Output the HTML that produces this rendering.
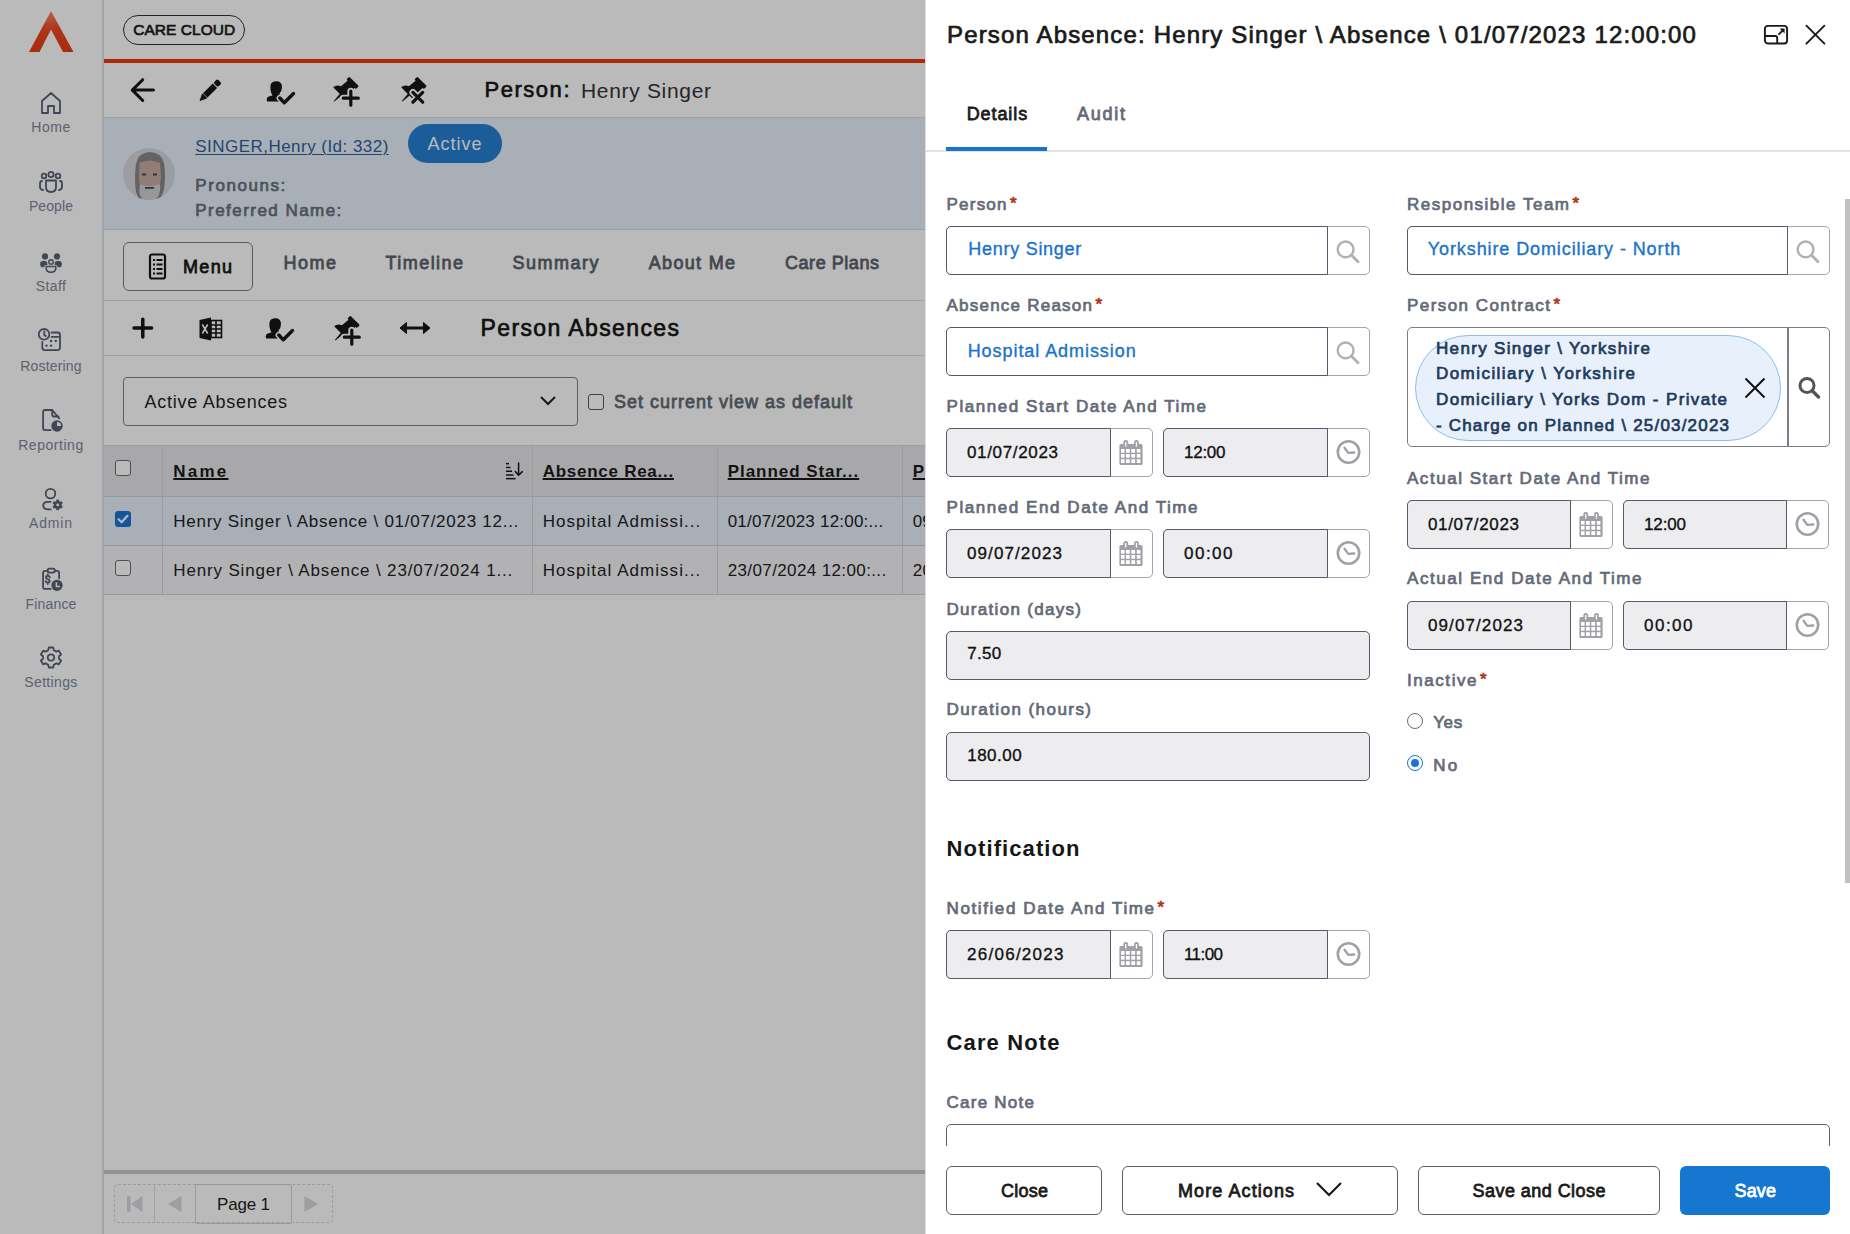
<!DOCTYPE html>
<html><head><meta charset="utf-8"><style>
*{margin:0;padding:0;box-sizing:border-box}
html,body{width:1850px;height:1234px;overflow:hidden;background:#fff;font-family:"Liberation Sans",sans-serif}
.a{position:absolute}
.t{position:absolute;white-space:nowrap;line-height:1}
</style></head><body>
<div class="a" style="left:0px;top:0px;width:925px;height:1234px;background:#fff"></div><div class="a" style="left:102px;top:0px;width:2px;height:1234px;background:#e0e3e9"></div><svg class="a" style="left:27px;top:9px;" width="48" height="46" viewBox="0 0 48 46"><defs><linearGradient id="lg" x1="0" y1="0" x2="0" y2="1"><stop offset="0" stop-color="#f58a6a"></stop><stop offset="0.45" stop-color="#ec4a22"></stop><stop offset="1" stop-color="#ea3c14"></stop></linearGradient></defs><path d="M24 2 L46.5 43 L36 43 L24 20.5 L12.5 43 L2 43 Z" fill="url(#lg)"></path></svg><div id="t1" class="t" style="left: 51px; top: 120.3px; font-size: 14px; font-weight: 400; color: rgb(125, 134, 153); transform: translateX(-50%); letter-spacing: 0.547px;">Home</div><div id="t2" class="t" style="left: 51px; top: 199.1px; font-size: 14px; font-weight: 400; color: rgb(125, 134, 153); transform: translateX(-50%); letter-spacing: 0.081px;">People</div><div id="t3" class="t" style="left: 51px; top: 279.4px; font-size: 14px; font-weight: 400; color: rgb(125, 134, 153); transform: translateX(-50%); letter-spacing: 0.363px;">Staff</div><div id="t4" class="t" style="left: 51px; top: 358.7px; font-size: 14px; font-weight: 400; color: rgb(125, 134, 153); transform: translateX(-50%); letter-spacing: 0.197px;">Rostering</div><div id="t5" class="t" style="left: 51px; top: 437.7px; font-size: 14px; font-weight: 400; color: rgb(125, 134, 153); transform: translateX(-50%); letter-spacing: 0.537px;">Reporting</div><div id="t6" class="t" style="left: 51px; top: 516.1px; font-size: 14px; font-weight: 400; color: rgb(125, 134, 153); transform: translateX(-50%); letter-spacing: 0.828px;">Admin</div><div id="t7" class="t" style="left: 51px; top: 596.5px; font-size: 14px; font-weight: 400; color: rgb(125, 134, 153); transform: translateX(-50%); letter-spacing: 0.198px;">Finance</div><div id="t8" class="t" style="left: 51px; top: 675.4px; font-size: 14px; font-weight: 400; color: rgb(125, 134, 153); transform: translateX(-50%); letter-spacing: 0.344px;">Settings</div><svg class="a" style="left:39px;top:90px;" width="24" height="26" viewBox="0 0 24 26"><path d="M3 11 L12 3 L21 11 L21 23 L15 23 L15 16 L9 16 L9 23 L3 23 Z" fill="none" stroke="#596071" stroke-width="1.8" stroke-linejoin="round" stroke-linecap="round"></path></svg><svg class="a" style="left:38px;top:170px;" width="26" height="25" viewBox="0 0 26 25"><circle cx="6" cy="6" r="2.3" fill="none" stroke="#596071" stroke-width="1.8" stroke-linejoin="round" stroke-linecap="round"></circle><circle cx="13" cy="4.5" r="2.6" fill="none" stroke="#596071" stroke-width="1.8" stroke-linejoin="round" stroke-linecap="round"></circle><circle cx="20" cy="6" r="2.3" fill="none" stroke="#596071" stroke-width="1.8" stroke-linejoin="round" stroke-linecap="round"></circle><path d="M4 11 Q2 11 2 13.5 L2 17 Q2 19.5 5 20" fill="none" stroke="#596071" stroke-width="1.8" stroke-linejoin="round" stroke-linecap="round"></path><path d="M22 11 Q24 11 24 13.5 L24 17 Q24 19.5 21 20" fill="none" stroke="#596071" stroke-width="1.8" stroke-linejoin="round" stroke-linecap="round"></path><path d="M8 10.5 L18 10.5 L18 17 Q18 22 13 22 Q8 22 8 17 Z" fill="none" stroke="#596071" stroke-width="1.8" stroke-linejoin="round" stroke-linecap="round"></path></svg><svg class="a" style="left:38px;top:251px;" width="26" height="24" viewBox="0 0 26 24"><g fill="#596071"><circle cx="7" cy="5.4" r="3.1"></circle><circle cx="19" cy="5.4" r="3.1"></circle><rect x="2.2" y="10" width="7.2" height="6.2" rx="2.8"></rect><rect x="16.6" y="10" width="7.2" height="6.2" rx="2.8"></rect></g><circle cx="13" cy="10.9" r="2.4" fill="#fff" stroke="#fff" stroke-width="2.2"></circle><circle cx="13" cy="10.9" r="2.2" fill="none" stroke="#596071" stroke-width="1.4"></circle><path d="M8.6 15.4 L17.4 15.4 Q18.2 15.4 18.2 16.3 Q18.2 21.5 13 21.5 Q7.8 21.5 7.8 16.3 Q7.8 15.4 8.6 15.4 Z" fill="#fff" stroke="#fff" stroke-width="3"></path><path d="M8.8 15.6 L17.2 15.6 Q17.9 15.6 17.9 16.4 Q17.9 21.2 13 21.2 Q8.1 21.2 8.1 16.4 Q8.1 15.6 8.8 15.6 Z" fill="none" stroke="#596071" stroke-width="1.5"></path></svg><svg class="a" style="left:37px;top:326px;" width="27" height="26" viewBox="0 0 27 26"><circle cx="7.05" cy="8.3" r="5.3" fill="none" stroke="#596071" stroke-width="1.8" stroke-linejoin="round" stroke-linecap="round"></circle><path d="M7.3 5.4 L7.3 9 L8.8 10.1" fill="none" stroke="#596071" stroke-width="1.8" stroke-linejoin="round" stroke-linecap="round"></path><path d="M5.3 15.8 L5.3 21.6 Q5.3 24.1 7.8 24.1 L20.5 24.1 Q23 24.1 23 21.6 L23 9 Q23 6.5 20.5 6.5 L14.6 6.5" fill="none" stroke="#596071" stroke-width="1.8" stroke-linejoin="round" stroke-linecap="round"></path><path d="M14.6 10.9 L23 10.9" fill="none" stroke="#596071" stroke-width="1.8" stroke-linejoin="round" stroke-linecap="round"></path><g fill="#596071"><circle cx="14.1" cy="15" r="1.2"></circle><circle cx="18.8" cy="15" r="1.2"></circle><circle cx="9.5" cy="19.6" r="1.2"></circle><circle cx="14.1" cy="19.6" r="1.2"></circle></g></svg><svg class="a" style="left:38px;top:407px;" width="26" height="27" viewBox="0 0 26 27"><path d="M12.8 23.1 L7.1 23.1 Q5.1 23.1 5.1 21.1 L5.1 5 Q5.1 3 7.1 3 L14.2 3 L21.2 11.3" fill="none" stroke="#596071" stroke-width="1.8" stroke-linejoin="round" stroke-linecap="round"></path><path d="M14.2 3 L14.2 7.5 Q14.2 9.5 16.2 9.5 L20.5 9.5" fill="none" stroke="#596071" stroke-width="1.8" stroke-linejoin="round" stroke-linecap="round"></path><circle cx="19" cy="19" r="4.9" fill="#fff" stroke="#596071" stroke-width="1.6"></circle><path d="M19 19 L19 14 A5 5 0 1 0 24 19 Z" fill="#596071"></path></svg><svg class="a" style="left:38px;top:486px;" width="26" height="26" viewBox="0 0 26 26"><circle cx="12.5" cy="7.6" r="4.8" fill="none" stroke="#596071" stroke-width="1.8" stroke-linejoin="round" stroke-linecap="round"></circle><path d="M12.6 15.8 L9.5 15.8 Q5.3 15.8 5.3 19.5 Q5.3 23.3 10 23.3 L12.8 23.3" fill="none" stroke="#596071" stroke-width="1.8" stroke-linejoin="round" stroke-linecap="round"></path><g transform="translate(19.7,18.9)"><circle r="3.9" fill="#596071"></circle><g fill="#596071"><rect x="-1.4" y="-5.3" width="2.8" height="10.6" rx="0.8"></rect><rect x="-1.4" y="-5.3" width="2.8" height="10.6" rx="0.8" transform="rotate(60)"></rect><rect x="-1.4" y="-5.3" width="2.8" height="10.6" rx="0.8" transform="rotate(120)"></rect></g><circle r="1.4" fill="#fff"></circle></g></svg><svg class="a" style="left:38px;top:566px;" width="26" height="26" viewBox="0 0 26 26"><path d="M12.8 22.9 L7.1 22.9 Q5.1 22.9 5.1 20.9 L5.1 6.8 Q5.1 4.8 7.1 4.8 L9.5 4.8 M16.9 4.8 L19.1 4.8 Q21.1 4.8 21.1 6.8 L21.1 12.3" fill="none" stroke="#596071" stroke-width="1.8" stroke-linejoin="round" stroke-linecap="round"></path><rect x="9.5" y="2.6" width="7.4" height="4" rx="2" fill="none" stroke="#596071" stroke-width="1.8" stroke-linejoin="round" stroke-linecap="round"></rect><path d="M11.9 11.2 Q11.4 9.9 9.8 9.9 Q8 9.9 8 11.4 Q8 12.7 9.8 13.1 Q11.7 13.5 11.7 15 Q11.7 16.5 9.8 16.5 Q8.1 16.5 7.6 15.3 M9.8 8.3 L9.8 9.9 M9.8 16.5 L9.8 18" fill="none" stroke="#596071" stroke-width="1.8" stroke-linejoin="round" stroke-linecap="round"></path><circle cx="19" cy="19.3" r="5.6" fill="#596071"></circle><path d="M18.4 16.2 L18.4 20.4 L22 20.4" fill="none" stroke="#fff" stroke-width="1.5"></path></svg><svg class="a" style="left:39px;top:645px;" width="24" height="25" viewBox="0 0 24 25"><g transform="translate(12,12.5)"><path d="M-2.2 -10 L2.2 -10 L2.8 -7.3 L5.3 -5.9 L7.9 -6.8 L10.1 -3 L8 -1.2 L8 1.2 L10.1 3 L7.9 6.8 L5.3 5.9 L2.8 7.3 L2.2 10 L-2.2 10 L-2.8 7.3 L-5.3 5.9 L-7.9 6.8 L-10.1 3 L-8 1.2 L-8 -1.2 L-10.1 -3 L-7.9 -6.8 L-5.3 -5.9 L-2.8 -7.3 Z" fill="none" stroke="#596071" stroke-width="1.8" stroke-linejoin="round" stroke-linecap="round"></path><circle r="3.2" fill="none" stroke="#596071" stroke-width="1.8" stroke-linejoin="round" stroke-linecap="round"></circle></g></svg><div class="a" style="left:123px;top:15px;width:122px;height:30px;border:1.6px solid #2f323b;border-radius:15px"></div><div id="t9" class="t" style="left: 184.2px; top: 21.7px; font-size: 15.5px; font-weight: 400; color: rgb(26, 26, 26); transform: translateX(-50%); -webkit-text-stroke: 0.65px rgb(26, 26, 26); letter-spacing: 0.04px;">CARE CLOUD</div><div class="a" style="left:104px;top:59px;width:821px;height:4px;background:#f0380f"></div><div class="a" style="left:104px;top:117px;width:821px;height:1px;background:#d9dce3"></div><svg class="a" style="left:128px;top:76px;" width="30" height="28" viewBox="0 0 30 28"><path d="M4.8 14.1 L25.5 14.1 M14.7 3.7 L4.3 14.1 L14.7 24.5" fill="none" stroke="#161616" stroke-width="3" stroke-linecap="round" stroke-linejoin="round"></path></svg><svg class="a" style="left:196px;top:76px;" width="28" height="28" viewBox="0 0 28 28"><g transform="translate(4.4,24.2) rotate(45)"><path d="M0 0.5 L-3 -6 L3 -6 Z" fill="#161616" stroke="#161616" stroke-width="0.8" stroke-linejoin="round"></path><rect x="-3.1" y="-20.5" width="6.2" height="13.6" fill="#161616"></rect><rect x="-3.1" y="-27" width="6.2" height="5.5" rx="1.6" fill="#161616"></rect></g></svg><svg class="a" style="left:265.5px;top:79.5px;" width="30" height="26" viewBox="0 0 30 26"><path d="M9.5 1.2 Q16 0.8 16 7 Q16 11 13.5 13.2 L14.5 16 L13.5 21.6 L1.5 21.6 Q0.8 21.6 0.8 20 L0.8 19 Q0.8 16.8 3.5 16.2 L6.5 15.5 Q5 13 4.5 10 Q3.2 1.5 9.5 1.2 Z" fill="#161616"></path><path d="M13.8 18 L18.3 22.8 L27.5 13.5" fill="none" stroke="#fff" stroke-width="6.5" stroke-linecap="round" stroke-linejoin="round"></path><path d="M13.8 18 L18.3 22.8 L27.5 13.5" fill="none" stroke="#161616" stroke-width="3.4" stroke-linecap="round" stroke-linejoin="round"></path></svg><svg class="a" style="left:332px;top:76px;" width="30" height="32" viewBox="0 0 30 32"><g transform="translate(21.2,6.2) rotate(45)"><path d="M-6.8 0 Q-6.8 -1.2 -5.6 -1.2 L5.6 -1.2 Q6.8 -1.2 6.8 0 L6.8 1.8 Q6.8 3 5.4 3 L4.9 3 L5.9 11.5 Q10.5 13.6 10.5 17.8 L-10.5 17.8 Q-10.5 13.6 -5.9 11.5 L-4.9 3 L-5.4 3 Q-6.8 3 -6.8 1.8 Z" fill="#161616"></path><path d="M-1.3 17.5 L1.3 17.5 L0.4 27 L-0.4 27 Z" fill="#161616"></path></g><path d="M18.8 15.2 L18.8 29.2 M11.3 22.2 L26.3 22.2" stroke="#fff" stroke-width="7" stroke-linecap="round"></path><path d="M18.8 15.2 L18.8 29.2 M11.3 22.2 L26.3 22.2" stroke="#161616" stroke-width="3.2" stroke-linecap="round"></path></svg><svg class="a" style="left:400.2px;top:76px;" width="30" height="32" viewBox="0 0 30 32"><g transform="translate(21.2,6.2) rotate(45)"><path d="M-6.8 0 Q-6.8 -1.2 -5.6 -1.2 L5.6 -1.2 Q6.8 -1.2 6.8 0 L6.8 1.8 Q6.8 3 5.4 3 L4.9 3 L5.9 11.5 Q10.5 13.6 10.5 17.8 L-10.5 17.8 Q-10.5 13.6 -5.9 11.5 L-4.9 3 L-5.4 3 Q-6.8 3 -6.8 1.8 Z" fill="#161616"></path><path d="M-1.3 17.5 L1.3 17.5 L0.4 27 L-0.4 27 Z" fill="#161616"></path></g><path d="M12.9 16.4 L22.7 26.2 M22.7 16.4 L12.9 26.2" stroke="#fff" stroke-width="7" stroke-linecap="round"></path><path d="M12.9 16.4 L22.7 26.2 M22.7 16.4 L12.9 26.2" stroke="#161616" stroke-width="3.2" stroke-linecap="round"></path></svg><div id="t10" class="t" style="left: 484.5px; top: 79px; font-size: 22px; font-weight: 400; color: rgb(22, 22, 22); -webkit-text-stroke: 0.66px rgb(22, 22, 22); letter-spacing: 1.529px;">Person:</div><div id="t11" class="t" style="left: 581px; top: 79.8px; font-size: 21px; font-weight: 400; color: rgb(51, 51, 51); letter-spacing: 0.676px;">Henry Singer</div><div class="a" style="left:104px;top:118px;width:821px;height:112px;background:#e8f0fb"></div><div class="a" style="left:104px;top:229px;width:821px;height:1px;background:#d5dae2"></div><svg class="a" style="left:123px;top:148px;" width="52" height="52" viewBox="0 0 52 52"><defs><clipPath id="avc"><circle cx="26" cy="26" r="26"></circle></clipPath></defs><g clip-path="url(#avc)"><circle cx="26" cy="26" r="26" fill="#d6d7dc"></circle><path d="M13 44 Q11 30 13 16 Q15 5 26 4 Q38 4 41 15 Q43 27 41 41 Q39 49 36 51 L16 51 Z" fill="#88878e"></path><path d="M16.5 15 Q26 10 37 15 L38 30 Q37 38 34 40 L19 40 Q16 37 16 30 Z" fill="#c9aca2"></path><path d="M17 36 Q26 40 37 36 Q38 47 33 51 Q26 54 19 51 Q15 46 17 36 Z" fill="#cfcfd3"></path><rect x="19" y="25.5" width="4" height="2" fill="#4a4a4e"></rect><rect x="30" y="25.5" width="4" height="2" fill="#4a4a4e"></rect><rect x="22" y="39" width="9" height="1.8" fill="#4a4a4e"></rect></g></svg><div id="t12" class="t" style="left: 195.3px; top: 138.1px; font-size: 17px; font-weight: 400; color: rgb(48, 95, 150); text-decoration: underline 1px; text-underline-offset: 2px; letter-spacing: 0.463px;">SINGER,Henry (Id: 332)</div><div class="a" style="left:408px;top:124px;width:94px;height:39px;background:#2580d2;border-radius:20px"></div><div id="t13" class="t" style="left: 455px; top: 135px; font-size: 18px; font-weight: 400; color: rgb(255, 255, 255); transform: translateX(-50%); letter-spacing: 0.994px;">Active</div><div id="t14" class="t" style="left: 195.3px; top: 176.9px; font-size: 17px; font-weight: 400; color: rgb(106, 113, 125); -webkit-text-stroke: 0.71px rgb(106, 113, 125); letter-spacing: 1.563px;">Pronouns:</div><div id="t15" class="t" style="left: 195.3px; top: 202.3px; font-size: 17px; font-weight: 400; color: rgb(106, 113, 125); -webkit-text-stroke: 0.71px rgb(106, 113, 125); letter-spacing: 1.452px;">Preferred Name:</div><div class="a" style="left:123px;top:242px;width:130px;height:49px;border:1.8px solid #777c8a;border-radius:6px"></div><svg class="a" style="left:147px;top:252px;" width="22" height="29" viewBox="0 0 22 29"><rect x="3" y="2.5" width="15" height="24" rx="2" fill="none" stroke="#161616" stroke-width="2.2"></rect><g fill="#161616"><rect x="6" y="7" width="2" height="2"></rect><rect x="9.5" y="7" width="6" height="2"></rect><rect x="6" y="11.5" width="2" height="2"></rect><rect x="9.5" y="11.5" width="6" height="2"></rect><rect x="6" y="16" width="2" height="2"></rect><rect x="9.5" y="16" width="6" height="2"></rect><rect x="6" y="20.5" width="2" height="2"></rect><rect x="9.5" y="20.5" width="6" height="2"></rect></g></svg><div id="t16" class="t" style="left: 183px; top: 257.6px; font-size: 18px; font-weight: 400; color: rgb(22, 22, 22); -webkit-text-stroke: 0.76px rgb(22, 22, 22); letter-spacing: 1.323px;">Menu</div><div id="t17" class="t" style="left: 283.4px; top: 254.3px; font-size: 18px; font-weight: 400; color: rgb(92, 98, 108); -webkit-text-stroke: 0.76px rgb(92, 98, 108); letter-spacing: 1.528px;">Home</div><div id="t18" class="t" style="left: 385.6px; top: 254.3px; font-size: 18px; font-weight: 400; color: rgb(92, 98, 108); -webkit-text-stroke: 0.76px rgb(92, 98, 108); letter-spacing: 1.434px;">Timeline</div><div id="t19" class="t" style="left: 512.4px; top: 254.3px; font-size: 18px; font-weight: 400; color: rgb(92, 98, 108); -webkit-text-stroke: 0.76px rgb(92, 98, 108); letter-spacing: 1.531px;">Summary</div><div id="t20" class="t" style="left: 648.8px; top: 254.3px; font-size: 18px; font-weight: 400; color: rgb(92, 98, 108); -webkit-text-stroke: 0.76px rgb(92, 98, 108); letter-spacing: 1.308px;">About Me</div><div id="t21" class="t" style="left: 785px; top: 254.3px; font-size: 18px; font-weight: 400; color: rgb(92, 98, 108); -webkit-text-stroke: 0.76px rgb(92, 98, 108); letter-spacing: 0.55px;">Care Plans</div><div class="a" style="left:104px;top:300px;width:821px;height:1px;background:#d9dce3"></div><svg class="a" style="left:130px;top:316px;" width="26" height="26" viewBox="0 0 26 26"><path d="M12.8 3.3 L12.8 20.9 M4 12.1 L21.6 12.1" stroke="#161616" stroke-width="3.5" stroke-linecap="round"></path></svg><svg class="a" style="left:198px;top:316px;" width="26" height="26" viewBox="0 0 26 26"><path d="M1.5 4 L13 1.5 L13 24.5 L1.5 22 Z" fill="#161616"></path><rect x="13" y="4.5" width="10.5" height="17" fill="none" stroke="#161616" stroke-width="1.6"></rect><path d="M13 9 H23.5 M13 13 H23.5 M13 17 H23.5 M18 4.5 V21.5" stroke="#161616" stroke-width="1.6"></path><path d="M4.3 8.5 L9.7 17.5 M9.7 8.5 L4.3 17.5" stroke="#fff" stroke-width="1.6"></path></svg><svg class="a" style="left:264.5px;top:316.5px;" width="30" height="26" viewBox="0 0 30 26"><path d="M9.5 1.2 Q16 0.8 16 7 Q16 11 13.5 13.2 L14.5 16 L13.5 21.6 L1.5 21.6 Q0.8 21.6 0.8 20 L0.8 19 Q0.8 16.8 3.5 16.2 L6.5 15.5 Q5 13 4.5 10 Q3.2 1.5 9.5 1.2 Z" fill="#161616"></path><path d="M13.8 18 L18.3 22.8 L27.5 13.5" fill="none" stroke="#fff" stroke-width="6.5" stroke-linecap="round" stroke-linejoin="round"></path><path d="M13.8 18 L18.3 22.8 L27.5 13.5" fill="none" stroke="#161616" stroke-width="3.4" stroke-linecap="round" stroke-linejoin="round"></path></svg><svg class="a" style="left:332.5px;top:315px;" width="30" height="32" viewBox="0 0 30 32"><g transform="translate(21.2,6.2) rotate(45)"><path d="M-6.8 0 Q-6.8 -1.2 -5.6 -1.2 L5.6 -1.2 Q6.8 -1.2 6.8 0 L6.8 1.8 Q6.8 3 5.4 3 L4.9 3 L5.9 11.5 Q10.5 13.6 10.5 17.8 L-10.5 17.8 Q-10.5 13.6 -5.9 11.5 L-4.9 3 L-5.4 3 Q-6.8 3 -6.8 1.8 Z" fill="#161616"></path><path d="M-1.3 17.5 L1.3 17.5 L0.4 27 L-0.4 27 Z" fill="#161616"></path></g><path d="M18.8 15.2 L18.8 29.2 M11.3 22.2 L26.3 22.2" stroke="#fff" stroke-width="7" stroke-linecap="round"></path><path d="M18.8 15.2 L18.8 29.2 M11.3 22.2 L26.3 22.2" stroke="#161616" stroke-width="3.2" stroke-linecap="round"></path></svg><svg class="a" style="left:398px;top:318px;" width="34" height="20" viewBox="0 0 34 20"><path d="M5 10 L29 10" stroke="#161616" stroke-width="3"></path><path d="M2 10 L8.5 4.5 L8.5 15.5 Z M32 10 L25.5 4.5 L25.5 15.5 Z" fill="#161616" stroke="#161616" stroke-width="1" stroke-linejoin="round"></path></svg><div id="t22" class="t" style="left: 480.5px; top: 317px; font-size: 23px; font-weight: 400; color: rgb(22, 22, 22); -webkit-text-stroke: 0.69px rgb(22, 22, 22); letter-spacing: 1.392px;">Person Absences</div><div class="a" style="left:104px;top:355px;width:821px;height:1px;background:#d9dce3"></div><div class="a" style="left:123px;top:377px;width:455px;height:49px;border:1.8px solid #7d8292;border-radius:4px"></div><div id="t23" class="t" style="left: 144.4px; top: 393.3px; font-size: 18px; font-weight: 400; color: rgb(31, 31, 31); letter-spacing: 0.752px;">Active Absences</div><svg class="a" style="left:538px;top:394px;" width="20" height="14" viewBox="0 0 20 14"><path d="M3.5 3.5 L10 10 L16.5 3.5" fill="none" stroke="#222" stroke-width="2" stroke-linecap="round"></path></svg><div class="a" style="left:588px;top:394px;width:16px;height:16px;border:1.5px solid #555a63;border-radius:3px;background:#fff"></div><div id="t24" class="t" style="left: 614px; top: 393.1px; font-size: 18px; font-weight: 400; color: rgb(100, 106, 116); -webkit-text-stroke: 0.76px rgb(100, 106, 116); letter-spacing: 0.996px;">Set current view as default</div><div class="a" style="left:104px;top:446px;width:821px;height:50px;background:#e6e5ea"></div><div class="a" style="left:104px;top:496px;width:821px;height:49px;background:#e8f0fb"></div><div class="a" style="left:104px;top:545px;width:821px;height:50px;background:#f5f5f8"></div><div class="a" style="left:104px;top:496px;width:821px;height:1px;background:#cfcfd6"></div><div class="a" style="left:104px;top:545px;width:821px;height:1px;background:#cfcfd6"></div><div class="a" style="left:104px;top:594px;width:821px;height:1px;background:#cfcfd6"></div><div class="a" style="left:104px;top:445px;width:821px;height:1px;background:#d9d9de"></div><div class="a" style="left:162px;top:446px;width:1px;height:149px;background:#d6d6dc"></div><div class="a" style="left:532px;top:446px;width:1px;height:149px;background:#d6d6dc"></div><div class="a" style="left:717px;top:446px;width:1px;height:149px;background:#d6d6dc"></div><div class="a" style="left:902px;top:446px;width:1px;height:149px;background:#d6d6dc"></div><div class="a" style="left:115px;top:460px;width:16px;height:16px;border:1.5px solid #6a6e77;border-radius:3px;background:#fff"></div><div class="a" style="left:115px;top:511px;width:16px;height:16px;border:none;border-radius:3px;background:#1a73d9"></div><svg class="a" style="left:115px;top:511px;" width="16" height="16" viewBox="0 0 16 16"><path d="M3.5 8.2 L6.6 11.3 L12.5 4.8" fill="none" stroke="#fff" stroke-width="2.2" stroke-linecap="round" stroke-linejoin="round"></path></svg><div class="a" style="left:115px;top:560px;width:16px;height:16px;border:1.5px solid #6a6e77;border-radius:3px;background:#fff"></div><div id="t25" class="t" style="left: 173.3px; top: 462.9px; font-size: 17px; font-weight: 700; color: rgb(26, 26, 26); text-decoration: underline 1.5px; text-underline-offset: 1px; letter-spacing: 2.229px;">Name</div><div id="t26" class="t" style="left: 542.7px; top: 462.9px; font-size: 17px; font-weight: 700; color: rgb(26, 26, 26); text-decoration: underline 1.5px; text-underline-offset: 1px; letter-spacing: 0.734px;">Absence Rea...</div><div id="t27" class="t" style="left: 727.7px; top: 462.9px; font-size: 17px; font-weight: 700; color: rgb(26, 26, 26); text-decoration: underline 1.5px; text-underline-offset: 1px; letter-spacing: 0.953px;">Planned Star...</div><div id="t28" class="t" style="left: 912.7px; top: 462.9px; font-size: 17px; font-weight: 700; color: rgb(26, 26, 26); text-decoration: underline 1.5px; text-underline-offset: 1px; letter-spacing: 1.029px;">Planned End...</div><svg class="a" style="left:503px;top:460px;" width="22" height="21" viewBox="0 0 22 21"><g fill="#161616"><rect x="3" y="2.9" width="3" height="1.5"></rect><rect x="3" y="6.7" width="4.5" height="1.5"></rect><rect x="3" y="10.5" width="6" height="1.5"></rect><rect x="3" y="14.3" width="7.5" height="1.5"></rect><rect x="3" y="17.9" width="9.5" height="1.5"></rect></g><path d="M15.6 3 L15.6 15.2 M12.3 11.6 L15.6 15.2 L19.3 11.6" fill="none" stroke="#161616" stroke-width="1.5" stroke-linecap="round"></path></svg><div id="t29" class="t" style="left: 173.3px; top: 512.6px; font-size: 17px; font-weight: 400; color: rgb(34, 34, 34); letter-spacing: 0.734px;">Henry Singer \ Absence \ 01/07/2023 12...</div><div id="t30" class="t" style="left: 542.7px; top: 512.6px; font-size: 17px; font-weight: 400; color: rgb(34, 34, 34); letter-spacing: 1.034px;">Hospital Admissi...</div><div id="t31" class="t" style="left: 727.7px; top: 512.6px; font-size: 17px; font-weight: 400; color: rgb(34, 34, 34); letter-spacing: 0.224px;">01/07/2023 12:00:...</div><div id="t32" class="t" style="left: 912.7px; top: 512.6px; font-size: 17px; font-weight: 400; color: rgb(34, 34, 34); letter-spacing: 0.224px;">09/07/2023 00:00:...</div><div id="t33" class="t" style="left: 173.3px; top: 561.9px; font-size: 17px; font-weight: 400; color: rgb(34, 34, 34); letter-spacing: 0.841px;">Henry Singer \ Absence \ 23/07/2024 1...</div><div id="t34" class="t" style="left: 542.7px; top: 561.9px; font-size: 17px; font-weight: 400; color: rgb(34, 34, 34); letter-spacing: 1.034px;">Hospital Admissi...</div><div id="t35" class="t" style="left: 727.7px; top: 561.9px; font-size: 17px; font-weight: 400; color: rgb(34, 34, 34); letter-spacing: 0.382px;">23/07/2024 12:00:...</div><div id="t36" class="t" style="left: 912.7px; top: 561.9px; font-size: 17px; font-weight: 400; color: rgb(34, 34, 34); letter-spacing: 0.382px;">20/08/2024 00:00:...</div><div class="a" style="left:104px;top:1170px;width:821px;height:4px;background:#c9c7cc"></div><div class="a" style="left:114px;top:1184px;width:219px;height:39px;border:1px dashed #d8d8dc;border-radius:4px"></div><div class="a" style="left:195px;top:1184px;width:97px;height:40px;border:1px solid #d2d2d6;border-radius:2px"></div><div class="a" style="left:154px;top:1184px;width:1px;height:39px;background:#dedee2"></div><svg class="a" style="left:125px;top:1194px;" width="20" height="20" viewBox="0 0 20 20"><rect x="2" y="2" width="3.5" height="16" fill="#d9d9df"></rect><path d="M17.5 2 L17.5 18 L6 10 Z" fill="#d9d9df"></path></svg><svg class="a" style="left:166px;top:1194px;" width="18" height="20" viewBox="0 0 18 20"><path d="M15.5 2 L15.5 18 L2 10 Z" fill="#d9d9df"></path></svg><svg class="a" style="left:302px;top:1194px;" width="18" height="20" viewBox="0 0 18 20"><path d="M2.5 2 L2.5 18 L16 10 Z" fill="#d9d9df"></path></svg><div id="t37" class="t" style="left: 217px; top: 1195.9px; font-size: 17px; font-weight: 400; color: rgb(34, 34, 34); letter-spacing: -0.178px;">Page 1</div><div class="a" style="left:0px;top:0px;width:925px;height:1234px;background:rgba(0,0,0,0.27)"></div><div class="a" style="left:925px;top:0px;width:925px;height:1234px;background:#fff"></div><div class="a" style="left:925px;top:0px;width:1px;height:1234px;background:#dddde3"></div><div id="t38" class="t" style="left: 947px; top: 23.2px; font-size: 24px; font-weight: 400; color: rgb(26, 26, 26); -webkit-text-stroke: 0.72px rgb(26, 26, 26); letter-spacing: 1.161px;">Person Absence: Henry Singer \ Absence \ 01/07/2023 12:00:00</div><svg class="a" style="left:1762px;top:23px;" width="28" height="24" viewBox="0 0 28 24"><rect x="2.9" y="2.9" width="22.2" height="17.6" rx="3" fill="none" stroke="#1a1a1a" stroke-width="1.9"></rect><path d="M2.9 13 L13.2 13 Q15.2 13 15.2 15 L15.2 20.5" fill="none" stroke="#1a1a1a" stroke-width="1.9"></path><path d="M17 11.2 L21.2 7" stroke="#1a1a1a" stroke-width="1.8" stroke-linecap="round"></path><path d="M17.6 5.6 L22.6 5.6 L22.6 10.6 Z" fill="#1a1a1a"></path></svg><svg class="a" style="left:1803px;top:23px;" width="25" height="25" viewBox="0 0 25 25"><path d="M3.4 2.7 L21.4 20.7 M21.4 2.7 L3.4 20.7" stroke="#1a1a1a" stroke-width="1.9" stroke-linecap="round"></path></svg><div id="t39" class="t" style="left: 966.7px; top: 104.8px; font-size: 18px; font-weight: 400; color: rgb(26, 26, 26); -webkit-text-stroke: 0.76px rgb(26, 26, 26); letter-spacing: 0.911px;">Details</div><div id="t40" class="t" style="left: 1077px; top: 104.8px; font-size: 18px; font-weight: 400; color: rgb(99, 105, 119); -webkit-text-stroke: 0.76px rgb(99, 105, 119); letter-spacing: 1.742px;">Audit</div><div class="a" style="left:925px;top:150px;width:925px;height:1.5px;background:#e2e2e6"></div><div class="a" style="left:946px;top:147px;width:101px;height:4px;background:#1a73cf"></div><div class="a" style="left:1845px;top:199px;width:5px;height:684px;background:#c1c1c1"></div><div id="t41" class="t" style="left: 946.5px; top: 195.6px; font-size: 17px; font-weight: 400; color: rgb(99, 106, 120); -webkit-text-stroke: 0.71px rgb(99, 106, 120); letter-spacing: 1.225px;">Person</div><div id="t42" class="t" style="left:1010.0px;top:194.6px;font-size:17px;font-weight:400;color:#b2341c;-webkit-text-stroke:0.71px #b2341c;">*</div><div class="a" style="left:946px;top:226px;width:424px;height:49px;border:1.5px solid #a4a4ab;border-radius:5px;background:#fff"></div><div class="a" style="left:946px;top:226px;width:382px;height:49px;border:1.6px solid #555969;border-right:1.8px solid #555969;border-radius:5px 0 0 5px;background:#fff"></div><svg class="a" style="left:1335px;top:238.5px;" width="26" height="26" viewBox="0 0 26 26"><circle cx="10.6" cy="10.4" r="7.9" fill="none" stroke="#b0b0b5" stroke-width="2.4"></circle><path d="M16.3 16.1 L23 22.8" stroke="#b0b0b5" stroke-width="2.8" stroke-linecap="round"></path></svg><div id="t43" class="t" style="left: 968.3px; top: 240.4px; font-size: 18px; font-weight: 400; color: rgb(26, 115, 201); -webkit-text-stroke: 0.36px rgb(26, 115, 201); letter-spacing: 0.723px;">Henry Singer</div><div id="t44" class="t" style="left: 946.5px; top: 297px; font-size: 17px; font-weight: 400; color: rgb(99, 106, 120); -webkit-text-stroke: 0.71px rgb(99, 106, 120); letter-spacing: 1.232px;">Absence Reason</div><div id="t45" class="t" style="left:1095.5px;top:296.0px;font-size:17px;font-weight:400;color:#b2341c;-webkit-text-stroke:0.71px #b2341c;">*</div><div class="a" style="left:946px;top:327px;width:424px;height:49px;border:1.5px solid #a4a4ab;border-radius:5px;background:#fff"></div><div class="a" style="left:946px;top:327px;width:382px;height:49px;border:1.6px solid #555969;border-right:1.8px solid #555969;border-radius:5px 0 0 5px;background:#fff"></div><svg class="a" style="left:1335px;top:339.5px;" width="26" height="26" viewBox="0 0 26 26"><circle cx="10.6" cy="10.4" r="7.9" fill="none" stroke="#b0b0b5" stroke-width="2.4"></circle><path d="M16.3 16.1 L23 22.8" stroke="#b0b0b5" stroke-width="2.8" stroke-linecap="round"></path></svg><div id="t46" class="t" style="left: 967.7px; top: 342.1px; font-size: 18px; font-weight: 400; color: rgb(26, 115, 201); -webkit-text-stroke: 0.36px rgb(26, 115, 201); letter-spacing: 0.937px;">Hospital Admission</div><div id="t47" class="t" style="left: 946.5px; top: 398px; font-size: 17px; font-weight: 400; color: rgb(99, 106, 120); -webkit-text-stroke: 0.71px rgb(99, 106, 120); letter-spacing: 1.548px;">Planned Start Date And Time</div><div class="a" style="left:946px;top:428px;width:207px;height:49px;border:1.5px solid #a4a4ab;border-radius:5px;background:#fff"></div><div class="a" style="left:946px;top:428px;width:165px;height:49px;border:1.6px solid #555969;border-right:1.8px solid #555969;border-radius:5px 0 0 5px;background:#ededf0"></div><div id="t48" class="t" style="left: 967px; top: 443.6px; font-size: 17px; font-weight: 400; color: rgb(17, 17, 17); -webkit-text-stroke: 0.34px rgb(17, 17, 17); letter-spacing: 0.656px;">01/07/2023</div><svg class="a" style="left:1119.0px;top:439.0px;" width="24" height="27" viewBox="0 0 24 27"><rect x="0.4" y="5" width="23.2" height="21" rx="1.6" fill="#a0a0a7"></rect><rect x="4.3" y="1" width="4.9" height="8" rx="2.4" fill="#a0a0a7"></rect><rect x="15" y="1" width="4.9" height="8" rx="2.4" fill="#a0a0a7"></rect><rect x="6.1" y="3" width="1.3" height="4.5" fill="#fff"></rect><rect x="16.8" y="3" width="1.3" height="4.5" fill="#fff"></rect><g fill="#fff"><rect x="2" y="10" width="3.6" height="3.7"></rect><rect x="7" y="10" width="3.8" height="3.7"></rect><rect x="12.3" y="10" width="3.8" height="3.7"></rect><rect x="17.8" y="10" width="3.6" height="3.7"></rect><rect x="2" y="15" width="3.6" height="3.7"></rect><rect x="7" y="15" width="3.8" height="3.7"></rect><rect x="12.3" y="15" width="3.8" height="3.7"></rect><rect x="17.8" y="15" width="3.6" height="3.7"></rect><rect x="2" y="20.2" width="3.6" height="3.8"></rect><rect x="7" y="20.2" width="3.8" height="3.8"></rect><rect x="12.3" y="20.2" width="3.8" height="3.8"></rect><rect x="17.8" y="20.2" width="3.6" height="3.8"></rect></g></svg><div class="a" style="left:1163px;top:428px;width:207px;height:49px;border:1.5px solid #a4a4ab;border-radius:5px;background:#fff"></div><div class="a" style="left:1163px;top:428px;width:165px;height:49px;border:1.6px solid #555969;border-right:1.8px solid #555969;border-radius:5px 0 0 5px;background:#ededf0"></div><div id="t49" class="t" style="left: 1184px; top: 443.6px; font-size: 17px; font-weight: 400; color: rgb(17, 17, 17); -webkit-text-stroke: 0.34px rgb(17, 17, 17); letter-spacing: -0.262px;">12:00</div><svg class="a" style="left:1334.8px;top:439.4px;" width="28" height="28" viewBox="0 0 28 28"><circle cx="13.5" cy="13" r="10.7" fill="none" stroke="#a0a0a7" stroke-width="2.6"></circle><path d="M9.5 8.7 L13.3 13.9 L19.2 13.5" fill="none" stroke="#a0a0a7" stroke-width="2.3" stroke-linecap="round" stroke-linejoin="round"></path></svg><div id="t50" class="t" style="left: 946.5px; top: 499.2px; font-size: 17px; font-weight: 400; color: rgb(99, 106, 120); -webkit-text-stroke: 0.71px rgb(99, 106, 120); letter-spacing: 1.559px;">Planned End Date And Time</div><div class="a" style="left:946px;top:529px;width:207px;height:49px;border:1.5px solid #a4a4ab;border-radius:5px;background:#fff"></div><div class="a" style="left:946px;top:529px;width:165px;height:49px;border:1.6px solid #555969;border-right:1.8px solid #555969;border-radius:5px 0 0 5px;background:#ededf0"></div><div id="t51" class="t" style="left: 967px; top: 544.6px; font-size: 17px; font-weight: 400; color: rgb(17, 17, 17); -webkit-text-stroke: 0.34px rgb(17, 17, 17); letter-spacing: 1.101px;">09/07/2023</div><svg class="a" style="left:1119.0px;top:540.0px;" width="24" height="27" viewBox="0 0 24 27"><rect x="0.4" y="5" width="23.2" height="21" rx="1.6" fill="#a0a0a7"></rect><rect x="4.3" y="1" width="4.9" height="8" rx="2.4" fill="#a0a0a7"></rect><rect x="15" y="1" width="4.9" height="8" rx="2.4" fill="#a0a0a7"></rect><rect x="6.1" y="3" width="1.3" height="4.5" fill="#fff"></rect><rect x="16.8" y="3" width="1.3" height="4.5" fill="#fff"></rect><g fill="#fff"><rect x="2" y="10" width="3.6" height="3.7"></rect><rect x="7" y="10" width="3.8" height="3.7"></rect><rect x="12.3" y="10" width="3.8" height="3.7"></rect><rect x="17.8" y="10" width="3.6" height="3.7"></rect><rect x="2" y="15" width="3.6" height="3.7"></rect><rect x="7" y="15" width="3.8" height="3.7"></rect><rect x="12.3" y="15" width="3.8" height="3.7"></rect><rect x="17.8" y="15" width="3.6" height="3.7"></rect><rect x="2" y="20.2" width="3.6" height="3.8"></rect><rect x="7" y="20.2" width="3.8" height="3.8"></rect><rect x="12.3" y="20.2" width="3.8" height="3.8"></rect><rect x="17.8" y="20.2" width="3.6" height="3.8"></rect></g></svg><div class="a" style="left:1163px;top:529px;width:207px;height:49px;border:1.5px solid #a4a4ab;border-radius:5px;background:#fff"></div><div class="a" style="left:1163px;top:529px;width:165px;height:49px;border:1.6px solid #555969;border-right:1.8px solid #555969;border-radius:5px 0 0 5px;background:#ededf0"></div><div id="t52" class="t" style="left: 1184px; top: 544.6px; font-size: 17px; font-weight: 400; color: rgb(17, 17, 17); -webkit-text-stroke: 0.34px rgb(17, 17, 17); letter-spacing: 1.488px;">00:00</div><svg class="a" style="left:1334.8px;top:540.4px;" width="28" height="28" viewBox="0 0 28 28"><circle cx="13.5" cy="13" r="10.7" fill="none" stroke="#a0a0a7" stroke-width="2.6"></circle><path d="M9.5 8.7 L13.3 13.9 L19.2 13.5" fill="none" stroke="#a0a0a7" stroke-width="2.3" stroke-linecap="round" stroke-linejoin="round"></path></svg><div id="t53" class="t" style="left: 946.5px; top: 600.6px; font-size: 17px; font-weight: 400; color: rgb(99, 106, 120); -webkit-text-stroke: 0.71px rgb(99, 106, 120); letter-spacing: 1.306px;">Duration (days)</div><div class="a" style="left:946px;top:631px;width:424px;height:49px;border:1.6px solid #555969;border-radius:5px;background:#ededf0"></div><div id="t54" class="t" style="left: 967.2px; top: 645.4px; font-size: 17px; font-weight: 400; color: rgb(17, 17, 17); -webkit-text-stroke: 0.34px rgb(17, 17, 17); letter-spacing: 0.302px;">7.50</div><div id="t55" class="t" style="left: 946.5px; top: 701.2px; font-size: 17px; font-weight: 400; color: rgb(99, 106, 120); -webkit-text-stroke: 0.71px rgb(99, 106, 120); letter-spacing: 1.445px;">Duration (hours)</div><div class="a" style="left:946px;top:732px;width:424px;height:49px;border:1.6px solid #555969;border-radius:5px;background:#ededf0"></div><div id="t56" class="t" style="left: 967.2px; top: 747.2px; font-size: 17px; font-weight: 400; color: rgb(17, 17, 17); -webkit-text-stroke: 0.34px rgb(17, 17, 17); letter-spacing: 0.5px;">180.00</div><div id="t57" class="t" style="left: 946.5px; top: 837.7px; font-size: 22px; font-weight: 700; color: rgb(22, 22, 22); letter-spacing: 1.091px;">Notification</div><div id="t58" class="t" style="left: 946.5px; top: 899.8px; font-size: 17px; font-weight: 400; color: rgb(99, 106, 120); -webkit-text-stroke: 0.71px rgb(99, 106, 120); letter-spacing: 1.601px;">Notified Date And Time</div><div id="t59" class="t" style="left:1157.5px;top:898.8px;font-size:17px;font-weight:400;color:#b2341c;-webkit-text-stroke:0.71px #b2341c;">*</div><div class="a" style="left:946px;top:930px;width:207px;height:49px;border:1.5px solid #a4a4ab;border-radius:5px;background:#fff"></div><div class="a" style="left:946px;top:930px;width:165px;height:49px;border:1.6px solid #555969;border-right:1.8px solid #555969;border-radius:5px 0 0 5px;background:#ededf0"></div><div id="t60" class="t" style="left: 967px; top: 945.6px; font-size: 17px; font-weight: 400; color: rgb(17, 17, 17); -webkit-text-stroke: 0.34px rgb(17, 17, 17); letter-spacing: 1.267px;">26/06/2023</div><svg class="a" style="left:1119.0px;top:941.0px;" width="24" height="27" viewBox="0 0 24 27"><rect x="0.4" y="5" width="23.2" height="21" rx="1.6" fill="#a0a0a7"></rect><rect x="4.3" y="1" width="4.9" height="8" rx="2.4" fill="#a0a0a7"></rect><rect x="15" y="1" width="4.9" height="8" rx="2.4" fill="#a0a0a7"></rect><rect x="6.1" y="3" width="1.3" height="4.5" fill="#fff"></rect><rect x="16.8" y="3" width="1.3" height="4.5" fill="#fff"></rect><g fill="#fff"><rect x="2" y="10" width="3.6" height="3.7"></rect><rect x="7" y="10" width="3.8" height="3.7"></rect><rect x="12.3" y="10" width="3.8" height="3.7"></rect><rect x="17.8" y="10" width="3.6" height="3.7"></rect><rect x="2" y="15" width="3.6" height="3.7"></rect><rect x="7" y="15" width="3.8" height="3.7"></rect><rect x="12.3" y="15" width="3.8" height="3.7"></rect><rect x="17.8" y="15" width="3.6" height="3.7"></rect><rect x="2" y="20.2" width="3.6" height="3.8"></rect><rect x="7" y="20.2" width="3.8" height="3.8"></rect><rect x="12.3" y="20.2" width="3.8" height="3.8"></rect><rect x="17.8" y="20.2" width="3.6" height="3.8"></rect></g></svg><div class="a" style="left:1163px;top:930px;width:207px;height:49px;border:1.5px solid #a4a4ab;border-radius:5px;background:#fff"></div><div class="a" style="left:1163px;top:930px;width:165px;height:49px;border:1.6px solid #555969;border-right:1.8px solid #555969;border-radius:5px 0 0 5px;background:#ededf0"></div><div id="t61" class="t" style="left: 1184px; top: 945.6px; font-size: 17px; font-weight: 400; color: rgb(17, 17, 17); -webkit-text-stroke: 0.34px rgb(17, 17, 17); letter-spacing: -0.57px;">11:00</div><svg class="a" style="left:1334.8px;top:941.4px;" width="28" height="28" viewBox="0 0 28 28"><circle cx="13.5" cy="13" r="10.7" fill="none" stroke="#a0a0a7" stroke-width="2.6"></circle><path d="M9.5 8.7 L13.3 13.9 L19.2 13.5" fill="none" stroke="#a0a0a7" stroke-width="2.3" stroke-linecap="round" stroke-linejoin="round"></path></svg><div id="t62" class="t" style="left: 946.5px; top: 1031.7px; font-size: 22px; font-weight: 700; color: rgb(22, 22, 22); letter-spacing: 1.135px;">Care Note</div><div id="t63" class="t" style="left: 946.5px; top: 1093.6px; font-size: 17px; font-weight: 400; color: rgb(99, 106, 120); -webkit-text-stroke: 0.71px rgb(99, 106, 120); letter-spacing: 1.252px;">Care Note</div><div class="a" style="left:925px;top:1116px;width:919px;height:30px;overflow:hidden"><div class="a" style="left:21px;top:8px;width:884px;height:80px;border:1.5px solid #5c606e;border-radius:5px"></div></div><div id="t64" class="t" style="left: 1407px; top: 195.6px; font-size: 17px; font-weight: 400; color: rgb(99, 106, 120); -webkit-text-stroke: 0.71px rgb(99, 106, 120); letter-spacing: 1.497px;">Responsible Team</div><div id="t65" class="t" style="left:1572.5px;top:194.6px;font-size:17px;font-weight:400;color:#b2341c;-webkit-text-stroke:0.71px #b2341c;">*</div><div class="a" style="left:1407px;top:226px;width:423px;height:49px;border:1.5px solid #a4a4ab;border-radius:5px;background:#fff"></div><div class="a" style="left:1407px;top:226px;width:381px;height:49px;border:1.6px solid #555969;border-right:1.8px solid #555969;border-radius:5px 0 0 5px;background:#fff"></div><svg class="a" style="left:1795px;top:238.5px;" width="26" height="26" viewBox="0 0 26 26"><circle cx="10.6" cy="10.4" r="7.9" fill="none" stroke="#b0b0b5" stroke-width="2.4"></circle><path d="M16.3 16.1 L23 22.8" stroke="#b0b0b5" stroke-width="2.8" stroke-linecap="round"></path></svg><div id="t66" class="t" style="left: 1427.8px; top: 240.4px; font-size: 18px; font-weight: 400; color: rgb(26, 115, 201); -webkit-text-stroke: 0.36px rgb(26, 115, 201); letter-spacing: 0.897px;">Yorkshire Domiciliary - North</div><div id="t67" class="t" style="left: 1407px; top: 297px; font-size: 17px; font-weight: 400; color: rgb(99, 106, 120); -webkit-text-stroke: 0.71px rgb(99, 106, 120); letter-spacing: 1.44px;">Person Contract</div><div id="t68" class="t" style="left:1553.5px;top:296.0px;font-size:17px;font-weight:400;color:#b2341c;-webkit-text-stroke:0.71px #b2341c;">*</div><div class="a" style="left:1407px;top:327px;width:423px;height:120px;border:1.5px solid #7a7d88;border-radius:5px;background:#fff"></div><div class="a" style="left:1787px;top:327px;width:1.5px;height:120px;background:#7a7d88"></div><div class="a" style="left:1415px;top:334.5px;width:366px;height:106px;border:1.2px solid #8fbde9;border-radius:53px/53px;background:#e8f1fb"></div><div id="t69" class="t" style="left: 1436px; top: 339.6px; font-size: 17px; font-weight: 400; color: rgb(31, 58, 92); -webkit-text-stroke: 0.71px rgb(31, 58, 92); letter-spacing: 1.334px;">Henry Singer \ Yorkshire</div><div id="t70" class="t" style="left: 1436px; top: 365.2px; font-size: 17px; font-weight: 400; color: rgb(31, 58, 92); -webkit-text-stroke: 0.71px rgb(31, 58, 92); letter-spacing: 1.444px;">Domiciliary \ Yorkshire</div><div id="t71" class="t" style="left: 1436px; top: 391.2px; font-size: 17px; font-weight: 400; color: rgb(31, 58, 92); -webkit-text-stroke: 0.71px rgb(31, 58, 92); letter-spacing: 1.359px;">Domiciliary \ Yorks Dom - Private</div><div id="t72" class="t" style="left: 1436px; top: 417px; font-size: 17px; font-weight: 400; color: rgb(31, 58, 92); -webkit-text-stroke: 0.71px rgb(31, 58, 92); letter-spacing: 1.189px;">- Charge on Planned \ 25/03/2023</div><svg class="a" style="left:1742px;top:375px;" width="26" height="26" viewBox="0 0 26 26"><path d="M3.5 3.5 L22.5 22.5 M22.5 3.5 L3.5 22.5" stroke="#111" stroke-width="2"></path></svg><svg class="a" style="left:1796px;top:375px;" width="28" height="28" viewBox="0 0 28 28"><circle cx="11" cy="10.5" r="7" fill="none" stroke="#555" stroke-width="3"></circle><path d="M16 15.5 L22.5 22" stroke="#555" stroke-width="3.4" stroke-linecap="round"></path></svg><div id="t73" class="t" style="left: 1407px; top: 469.6px; font-size: 17px; font-weight: 400; color: rgb(99, 106, 120); -webkit-text-stroke: 0.71px rgb(99, 106, 120); letter-spacing: 1.536px;">Actual Start Date And Time</div><div class="a" style="left:1407px;top:500px;width:206px;height:49px;border:1.5px solid #a4a4ab;border-radius:5px;background:#fff"></div><div class="a" style="left:1407px;top:500px;width:164px;height:49px;border:1.6px solid #555969;border-right:1.8px solid #555969;border-radius:5px 0 0 5px;background:#ededf0"></div><div id="t74" class="t" style="left: 1428px; top: 515.6px; font-size: 17px; font-weight: 400; color: rgb(17, 17, 17); -webkit-text-stroke: 0.34px rgb(17, 17, 17); letter-spacing: 0.656px;">01/07/2023</div><svg class="a" style="left:1579.0px;top:511.0px;" width="24" height="27" viewBox="0 0 24 27"><rect x="0.4" y="5" width="23.2" height="21" rx="1.6" fill="#a0a0a7"></rect><rect x="4.3" y="1" width="4.9" height="8" rx="2.4" fill="#a0a0a7"></rect><rect x="15" y="1" width="4.9" height="8" rx="2.4" fill="#a0a0a7"></rect><rect x="6.1" y="3" width="1.3" height="4.5" fill="#fff"></rect><rect x="16.8" y="3" width="1.3" height="4.5" fill="#fff"></rect><g fill="#fff"><rect x="2" y="10" width="3.6" height="3.7"></rect><rect x="7" y="10" width="3.8" height="3.7"></rect><rect x="12.3" y="10" width="3.8" height="3.7"></rect><rect x="17.8" y="10" width="3.6" height="3.7"></rect><rect x="2" y="15" width="3.6" height="3.7"></rect><rect x="7" y="15" width="3.8" height="3.7"></rect><rect x="12.3" y="15" width="3.8" height="3.7"></rect><rect x="17.8" y="15" width="3.6" height="3.7"></rect><rect x="2" y="20.2" width="3.6" height="3.8"></rect><rect x="7" y="20.2" width="3.8" height="3.8"></rect><rect x="12.3" y="20.2" width="3.8" height="3.8"></rect><rect x="17.8" y="20.2" width="3.6" height="3.8"></rect></g></svg><div class="a" style="left:1623px;top:500px;width:206px;height:49px;border:1.5px solid #a4a4ab;border-radius:5px;background:#fff"></div><div class="a" style="left:1623px;top:500px;width:164px;height:49px;border:1.6px solid #555969;border-right:1.8px solid #555969;border-radius:5px 0 0 5px;background:#ededf0"></div><div id="t75" class="t" style="left: 1644px; top: 515.6px; font-size: 17px; font-weight: 400; color: rgb(17, 17, 17); -webkit-text-stroke: 0.34px rgb(17, 17, 17); letter-spacing: -0.137px;">12:00</div><svg class="a" style="left:1793.8px;top:511.4px;" width="28" height="28" viewBox="0 0 28 28"><circle cx="13.5" cy="13" r="10.7" fill="none" stroke="#a0a0a7" stroke-width="2.6"></circle><path d="M9.5 8.7 L13.3 13.9 L19.2 13.5" fill="none" stroke="#a0a0a7" stroke-width="2.3" stroke-linecap="round" stroke-linejoin="round"></path></svg><div id="t76" class="t" style="left: 1407px; top: 570.1px; font-size: 17px; font-weight: 400; color: rgb(99, 106, 120); -webkit-text-stroke: 0.71px rgb(99, 106, 120); letter-spacing: 1.567px;">Actual End Date And Time</div><div class="a" style="left:1407px;top:601px;width:206px;height:49px;border:1.5px solid #a4a4ab;border-radius:5px;background:#fff"></div><div class="a" style="left:1407px;top:601px;width:164px;height:49px;border:1.6px solid #555969;border-right:1.8px solid #555969;border-radius:5px 0 0 5px;background:#ededf0"></div><div id="t77" class="t" style="left: 1428px; top: 616.6px; font-size: 17px; font-weight: 400; color: rgb(17, 17, 17); -webkit-text-stroke: 0.34px rgb(17, 17, 17); letter-spacing: 1.101px;">09/07/2023</div><svg class="a" style="left:1579.0px;top:612.0px;" width="24" height="27" viewBox="0 0 24 27"><rect x="0.4" y="5" width="23.2" height="21" rx="1.6" fill="#a0a0a7"></rect><rect x="4.3" y="1" width="4.9" height="8" rx="2.4" fill="#a0a0a7"></rect><rect x="15" y="1" width="4.9" height="8" rx="2.4" fill="#a0a0a7"></rect><rect x="6.1" y="3" width="1.3" height="4.5" fill="#fff"></rect><rect x="16.8" y="3" width="1.3" height="4.5" fill="#fff"></rect><g fill="#fff"><rect x="2" y="10" width="3.6" height="3.7"></rect><rect x="7" y="10" width="3.8" height="3.7"></rect><rect x="12.3" y="10" width="3.8" height="3.7"></rect><rect x="17.8" y="10" width="3.6" height="3.7"></rect><rect x="2" y="15" width="3.6" height="3.7"></rect><rect x="7" y="15" width="3.8" height="3.7"></rect><rect x="12.3" y="15" width="3.8" height="3.7"></rect><rect x="17.8" y="15" width="3.6" height="3.7"></rect><rect x="2" y="20.2" width="3.6" height="3.8"></rect><rect x="7" y="20.2" width="3.8" height="3.8"></rect><rect x="12.3" y="20.2" width="3.8" height="3.8"></rect><rect x="17.8" y="20.2" width="3.6" height="3.8"></rect></g></svg><div class="a" style="left:1623px;top:601px;width:206px;height:49px;border:1.5px solid #a4a4ab;border-radius:5px;background:#fff"></div><div class="a" style="left:1623px;top:601px;width:164px;height:49px;border:1.6px solid #555969;border-right:1.8px solid #555969;border-radius:5px 0 0 5px;background:#ededf0"></div><div id="t78" class="t" style="left: 1644px; top: 616.6px; font-size: 17px; font-weight: 400; color: rgb(17, 17, 17); -webkit-text-stroke: 0.34px rgb(17, 17, 17); letter-spacing: 1.488px;">00:00</div><svg class="a" style="left:1793.8px;top:612.4px;" width="28" height="28" viewBox="0 0 28 28"><circle cx="13.5" cy="13" r="10.7" fill="none" stroke="#a0a0a7" stroke-width="2.6"></circle><path d="M9.5 8.7 L13.3 13.9 L19.2 13.5" fill="none" stroke="#a0a0a7" stroke-width="2.3" stroke-linecap="round" stroke-linejoin="round"></path></svg><div id="t79" class="t" style="left: 1407px; top: 671.6px; font-size: 17px; font-weight: 400; color: rgb(99, 106, 120); -webkit-text-stroke: 0.71px rgb(99, 106, 120); letter-spacing: 1.558px;">Inactive</div><div id="t80" class="t" style="left:1480.0px;top:670.6px;font-size:17px;font-weight:400;color:#b2341c;-webkit-text-stroke:0.71px #b2341c;">*</div><div class="a" style="left:1407px;top:713px;width:16px;height:16px;border:1.5px solid #6a6e77;border-radius:50%;background:#fff"></div><div id="t81" class="t" style="left: 1433.2px; top: 714.3px; font-size: 17px; font-weight: 400; color: rgb(99, 106, 120); -webkit-text-stroke: 0.71px rgb(99, 106, 120); letter-spacing: 0.633px;">Yes</div><div class="a" style="left:1407px;top:755px;width:16px;height:16px;border:1.5px solid #1a73d9;border-radius:50%;background:#fff"></div><div class="a" style="left:1411px;top:759px;width:8px;height:8px;border-radius:50%;background:#1a73d9"></div><div id="t82" class="t" style="left: 1433.2px; top: 756.5px; font-size: 17px; font-weight: 400; color: rgb(99, 106, 120); -webkit-text-stroke: 0.71px rgb(99, 106, 120); letter-spacing: 2.266px;">No</div><div class="a" style="left:946px;top:1166px;width:156px;height:49px;border:1.5px solid #5c606e;border-radius:6px;background:#fff"></div><div id="t83" class="t" style="left: 1001px; top: 1181.5px; font-size: 18px; font-weight: 400; color: rgb(26, 26, 26); -webkit-text-stroke: 0.76px rgb(26, 26, 26); letter-spacing: 0.242px;">Close</div><div class="a" style="left:1122px;top:1166px;width:276px;height:49px;border:1.5px solid #5c606e;border-radius:6px;background:#fff"></div><div id="t84" class="t" style="left: 1178px; top: 1181.5px; font-size: 18px; font-weight: 400; color: rgb(26, 26, 26); -webkit-text-stroke: 0.76px rgb(26, 26, 26); letter-spacing: 1.087px;">More Actions</div><svg class="a" style="left:1314px;top:1180px;" width="30" height="18" viewBox="0 0 30 18"><path d="M3 3 L15 15 L27 3" fill="none" stroke="#1a1a1a" stroke-width="2.2"></path></svg><div class="a" style="left:1418px;top:1166px;width:242px;height:49px;border:1.5px solid #5c606e;border-radius:6px;background:#fff"></div><div id="t85" class="t" style="left: 1472.5px; top: 1181.5px; font-size: 18px; font-weight: 400; color: rgb(26, 26, 26); -webkit-text-stroke: 0.76px rgb(26, 26, 26); letter-spacing: 0.454px;">Save and Close</div><div class="a" style="left:1680px;top:1166px;width:150px;height:49px;background:#1577d0;border-radius:6px"></div><div id="t86" class="t" style="left: 1734.5px; top: 1181.5px; font-size: 18px; font-weight: 400; color: rgb(255, 255, 255); -webkit-text-stroke: 0.76px rgb(255, 255, 255); letter-spacing: 0.156px;">Save</div>

</body></html>
